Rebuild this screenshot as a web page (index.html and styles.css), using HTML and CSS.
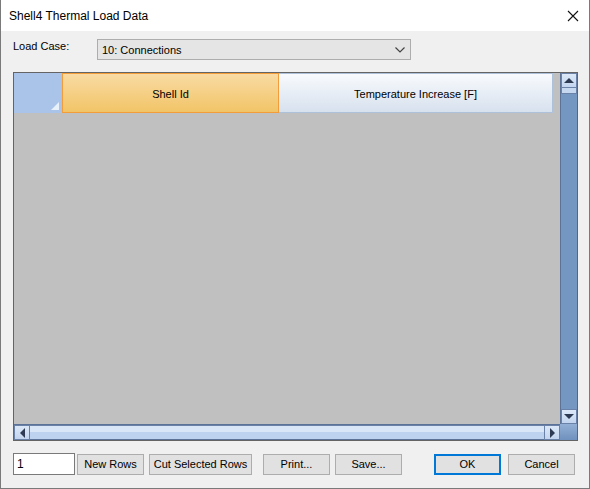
FILE: index.html
```html
<!DOCTYPE html>
<html lang="en">
<head>
	<meta charset="UTF-8">
	<title>Shell4 Thermal Load Data</title>
	<link rel="stylesheet" href="styles.css">
</head>
<body>

	<div class="dialog">
		<div class="titlebar">
			<span class="title">Shell4 Thermal Load Data</span>
			<svg class="close" width="12" height="12" viewBox="0 0 12 12">
				<path d="M1 1L11 11M11 1L1 11" stroke="#111" stroke-width="1.1" fill="none"/>
			</svg>
		</div>

		<div class="content">
			<div class="case-row">
				<label class="case-label">Load Case:</label>
				<div class="combo">
					<span>10: Connections</span>
					<svg width="10" height="6" viewBox="0 0 10 6">
						<path d="M0.5 0.5L5 5L9.5 0.5" stroke="#444" stroke-width="1.2" fill="none"/>
					</svg>
				</div>
			</div>

			<!-- sheet: header row, empty body, scroll bars -->
			<div class="sheet">
				<div class="sheet-main">
					<div class="head">
						<div class="corner"><span class="tri"></span></div>
						<div class="col col-sel">Shell Id</div>
						<div class="col col-temp">Temperature Increase [F]</div>
					</div>
				</div>
				<div class="vscroll">
					<div class="sbtn"><span class="arr up"></span></div>
					<div class="vthumb"></div>
					<div class="vtrack"></div>
					<div class="sbtn"><span class="arr down"></span></div>
				</div>
				<div class="hscroll">
					<div class="sbtn"><span class="arr left"></span></div>
					<div class="htrack"></div>
					<div class="sbtn"><span class="arr right"></span></div>
				</div>
				<div class="scorner"></div>
			</div>

			<div class="bottom">
				<input type="text" class="rows-num" value="1">
				<button class="btn btn-new">New Rows</button>
				<button class="btn btn-cut">Cut Selected Rows</button>
				<button class="btn btn-print">Print...</button>
				<button class="btn">Save...</button>
				<button class="btn btn-ok">OK</button>
				<button class="btn">Cancel</button>
			</div>
		</div>
	</div>

</body>
</html>
```

FILE: styles.css
```css
*{margin: 0;padding: 0;box-sizing: border-box;}
body{
	font-family: "Liberation Sans", Arial, sans-serif;
	font-size: 11px;
	color: #000;
	background: #fff;
}
.dialog{
	width: 590px;
	height: 489px;
	border: 1px solid #7a7a7a;
	border-top: none;
	background: #f0f0f0;
	display: flex;
	flex-direction: column;
}

/*title bar*/
.titlebar{
	height: 31px;
	background: #fff;
	display: flex;
	align-items: center;
	padding: 0 10px 0 8px;
}
.title{
	flex: 1;
	font-size: 12px;
	color: #000;
	padding-top: 1px;
}

.content{
	flex: 1;
	display: flex;
	flex-direction: column;
	padding: 8px 11px 0 12px;
}
.case-row{
	display: flex;
	align-items: center;
	height: 21px;
}
.case-label{
	width: 84px;
	margin-top: -7px;
}
.combo{
	width: 314px;
	height: 21px;
	border: 1px solid #adadad;
	background: #e5e5e5;
	display: flex;
	align-items: center;
	justify-content: space-between;
	padding: 0 5px 0 4px;
}

/*sheet*/
.sheet{
	margin-top: 12px;
	width: 565px;
	height: 369px;
	border: 1px solid #646464;
	display: grid;
	grid-template-columns: 1fr 17px;
	grid-template-rows: 1fr 16px;
	background: #c0c0c0;
}
.sheet-main{
	overflow: hidden;
}
.head{
	display: flex;
	height: 40px;
}
.corner{
	width: 48px;
	background: #a9c4e8;
	position: relative;
}
.tri{
	position: absolute;
	right: 3px;
	bottom: 3px;
	width: 0;
	height: 0;
	border-left: 8px solid transparent;
	border-bottom: 8px solid #e8f0fa;
}
.col{
	display: flex;
	align-items: center;
	justify-content: center;
	padding-top: 2px;
}
.col-sel{
	width: 217px;
	background: linear-gradient(#f9dba3, #f1c467);
	border: 1px solid #f29d3a;
}
.col-temp{
	width: 274px;
	background: linear-gradient(#f8fafd, #d7e1ee);
	border: 1px solid #adc1da;
	border-left: none;
}

/*scroll bars*/
.vscroll{
	display: flex;
	flex-direction: column;
	background: #7397c0;
	border-left: 1px solid #5c7397;
}
.hscroll{
	display: flex;
	background: #5c7397;
	border-top: 1px solid #5c7397;
}
.sbtn{
	width: 16px;
	height: 15px;
	background: linear-gradient(#dce8f8, #c2d5ef);
	border: 1px solid #6a82a8;
	display: flex;
	align-items: center;
	justify-content: center;
}
.vthumb{
	height: 6px;
	background: #c6d8f0;
	border: 1px solid #6a82a8;
	border-top: none;
}
.vtrack{
	flex: 1;
}
.htrack{
	flex: 1;
	background: linear-gradient(#d9e6f8 0, #d9e6f8 45%, #bdd2ee 45%, #bdd2ee 100%);
	border-top: 1px solid #6a82a8;
	border-bottom: 1px solid #5c7397;
}
.scorner{
	background: linear-gradient(#93afd5, #6f91bd);
}
.arr{
	width: 0;
	height: 0;
}
.arr.up{
	border-left: 5px solid transparent;
	border-right: 5px solid transparent;
	border-bottom: 5px solid #2e3a52;
}
.arr.down{
	border-left: 5px solid transparent;
	border-right: 5px solid transparent;
	border-top: 5px solid #2e3a52;
}
.arr.left{
	border-top: 5px solid transparent;
	border-bottom: 5px solid transparent;
	border-right: 5px solid #2e3a52;
}
.arr.right{
	border-top: 5px solid transparent;
	border-bottom: 5px solid transparent;
	border-left: 5px solid #2e3a52;
}

/*bottom bar*/
.bottom{
	display: flex;
	align-items: center;
	margin-top: 12px;
}
.rows-num{
	width: 62px;
	height: 22px;
	border: 1px solid #7a7a7a;
	font-family: inherit;
	font-size: 12px;
	padding: 0 3px;
	outline: none;
}
.btn{
	height: 21px;
	width: 67px;
	padding: 0;
	white-space: nowrap;
	border: 1px solid #adadad;
	background: #e1e1e1;
	font-family: inherit;
	font-size: 11px;
	margin-left: 5px;
	color: #000;
}
.btn-new{
	margin-left: 2px;
}
.btn-cut{
	width: 103px;
}
.btn-print{
	margin-left: 11px;
}
.btn-ok{
	margin-left: 32px;
	border: 2px solid #0078d7;
	margin-right: 2px;
}
```
